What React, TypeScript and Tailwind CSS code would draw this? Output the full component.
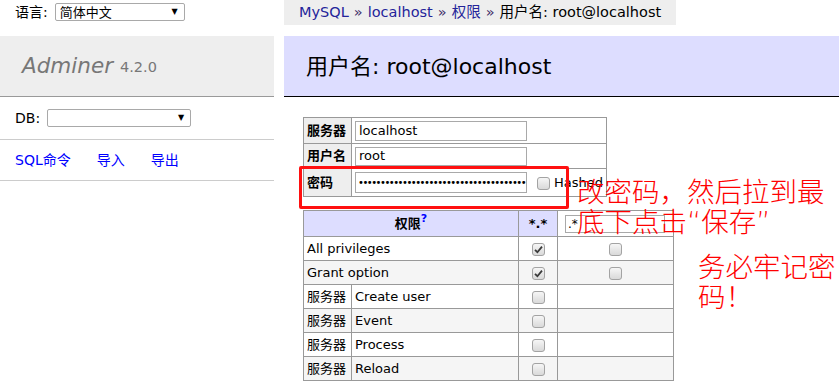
const FONT = "font-['DejaVu_Sans','Noto_Sans_CJK_SC',sans-serif]"

function FakeSelect({ value, width }: { value: string; width: string }) {
  return (
    <span className={`inline-flex items-center justify-between h-[18px] ${width} border border-[#a9a9a9] rounded-[2px] bg-white pl-[4px] pr-[6px] text-[13px] leading-none text-black`}>
      <span>{value}</span>
      <span className="text-[8px]">▼</span>
    </span>
  )
}

function Check({ checked = false }: { checked?: boolean }) {
  return (
    <span className="inline-flex items-center justify-center w-[13px] h-[13px] rounded-[3px] border border-[#a3a3a3] bg-linear-to-b from-[#f6f6f6] to-[#d9d9d9] align-middle">
      {checked && (
        <svg width="9" height="9" viewBox="0 0 9 9">
          <path d="M1 4.8 L3.4 7.2 L8 1.6" fill="none" stroke="#3a3a3a" strokeWidth="1.8" />
        </svg>
      )}
    </span>
  )
}

const privRows = [
  { scope: '', name: 'All privileges', checked: true, extra: true },
  { scope: '', name: 'Grant option', checked: true, extra: true },
  { scope: '服务器', name: 'Create user', checked: false, extra: false },
  { scope: '服务器', name: 'Event', checked: false, extra: false },
  { scope: '服务器', name: 'Process', checked: false, extra: false },
  { scope: '服务器', name: 'Reload', checked: false, extra: false },
]

export default function App() {
  return (
    <div className={`relative w-[839px] h-[382px] overflow-hidden bg-white text-black ${FONT}`}>
      <div className="flex">
        {/* Sidebar */}
        <div className="w-[274px] shrink-0 text-[14px]">
          <div className="h-[36px] pl-[15px] pt-[3px] flex items-start gap-[7px]">
            <span className="leading-[18px]">语言:</span>
            <FakeSelect value="简体中文" width="w-[130px]" />
          </div>
          <div className="h-[61px] bg-[#eee] border-b border-[#999] pl-[22px] flex items-center gap-[7px] text-[#777]">
            <span className="italic text-[21.5px]">Adminer</span>
            <span className="text-[14.5px] pt-[4px]">4.2.0</span>
          </div>
          <div className="h-[43px] border-b border-[#ccc] pl-[15px] flex items-center gap-[7px]">
            <span>DB:</span>
            <FakeSelect value="" width="w-[144px]" />
          </div>
          <div className="h-[41px] border-b border-[#ccc] pl-[15px] flex items-center gap-[26px] text-[#0000ff]">
            <span>SQL命令</span>
            <span>导入</span>
            <span>导出</span>
          </div>
        </div>

        {/* Content */}
        <div className="ml-[10px] flex-1">
          <div className="w-[392px] h-[25px] bg-[#eee] pl-[15px] flex items-center text-[14.5px] whitespace-nowrap">
            <span className="text-[#24249a]">MySQL</span>
            <span className="text-[#3b2a66] mx-[5px]">»</span>
            <span className="text-[#24249a]">localhost</span>
            <span className="text-[#3b2a66] mx-[5px]">»</span>
            <span className="text-[#24249a]">权限</span>
            <span className="text-[#3b2a66] mx-[5px]">»</span>
            <span>用户名: root@localhost</span>
          </div>

          <div className="mt-[11px] h-[61px] bg-[#ddf] border-b border-black pl-[22px] flex items-center text-[22px]">
            用户名: root@localhost
          </div>

          {/* Login table */}
          <table className="ml-[19px] mt-[20px] border-collapse border border-[#999] text-[13px]">
            <tbody>
              <tr className="h-[26px]">
                <th className="w-[48px] bg-[#eee] border border-[#999] px-[3px] text-left font-bold">服务器</th>
                <td className="w-[254px] border border-[#999] px-[3px]">
                  <span className="flex items-center w-[172px] h-[20px] border border-[#a9a9a9] px-[3px]">localhost</span>
                </td>
              </tr>
              <tr className="h-[25px]">
                <th className="bg-[#eee] border border-[#999] px-[3px] text-left font-bold">用户名</th>
                <td className="border border-[#999] px-[3px]">
                  <span className="flex items-center w-[172px] h-[19px] border border-[#a9a9a9] px-[3px]">root</span>
                </td>
              </tr>
              <tr className="h-[28px]">
                <th className="bg-[#eee] border border-[#999] px-[3px] text-left font-bold">密码</th>
                <td className="border border-[#999] px-[3px] whitespace-nowrap">
                  <span className="flex items-center">
                    <span className="flex items-center w-[172px] h-[21px] border border-[#a9a9a9] px-[2px] text-[10px] tracking-[-1.5px] overflow-hidden">
                      {'•'.repeat(38)}
                    </span>
                    <span className="ml-[10px] mr-[4px]"><Check /></span>
                    <span>Hashed</span>
                  </span>
                </td>
              </tr>
            </tbody>
          </table>

          {/* Privileges table */}
          <table className="ml-[19px] mt-[13px] border-collapse border border-[#999] text-[13px]">
            <thead>
              <tr className="h-[26px] bg-[#ddf]">
                <th colSpan={2} className="w-[215px] border border-[#999] font-bold text-center">
                  权限<sup className="text-[#0000ff] text-[11px]">?</sup>
                </th>
                <th className="w-[39px] border border-[#999] font-bold text-center">*.*</th>
                <th className="w-[116px] border border-[#999] bg-white px-[7px]">
                  <span className="flex items-center w-[100px] h-[18px] border border-[#a9a9a9] px-[2px] font-normal text-[12px]">.*</span>
                </th>
              </tr>
            </thead>
            <tbody>
              {privRows.map((r, i) => (
                <tr key={r.name} className={`h-[24px] ${i % 2 === 1 ? 'bg-[#f5f5f5]' : 'bg-white'}`}>
                  {r.scope ? (
                    <>
                      <td className="w-[48px] border border-[#999] px-[3px]">{r.scope}</td>
                      <td className="w-[167px] border border-[#999] px-[3px]">{r.name}</td>
                    </>
                  ) : (
                    <td colSpan={2} className="border border-[#999] px-[3px]">{r.name}</td>
                  )}
                  <td className="border border-[#999] text-center leading-none"><Check checked={r.checked} /></td>
                  <td className="border border-[#999] text-center leading-none">{r.extra && <Check />}</td>
                </tr>
              ))}
            </tbody>
          </table>
        </div>
      </div>

      {/* Annotations */}
      <div className="absolute left-[299px] top-[166px] w-[270px] h-[43px] border-[3px] border-[#ff1010] rounded-[2px]" />
      <div className="absolute left-[577px] top-[175px] text-[27.5px] leading-[30px] text-[#ff0000] font-light font-['Noto_Sans_CJK_SC',sans-serif] whitespace-nowrap">
        <div>改密码，然后拉到最</div>
        <div>底下点击<span className="font-['DejaVu_Sans',sans-serif]">“</span>保存<span className="font-['DejaVu_Sans',sans-serif]">”</span></div>
      </div>
      <div className="absolute left-[698px] top-[250px] text-[27.5px] leading-[30px] text-[#ff0000] font-light font-['Noto_Sans_CJK_SC',sans-serif] whitespace-nowrap">
        <div>务必牢记密</div>
        <div>码！</div>
      </div>
    </div>
  )
}
